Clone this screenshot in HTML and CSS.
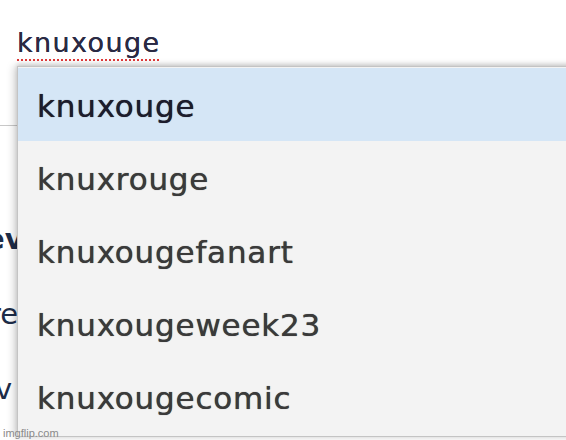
FILE: index.html
```html
<!DOCTYPE html>
<html lang="en">
<head>
    <meta charset="UTF-8">
    <meta name="viewport" content="width=device-width, initial-scale=1.0">
    <title>knuxouge</title>
    <link rel="stylesheet" href="styles.css">
</head>
<body>
    <div class="page">
        <div class="search">
            <span class="query">knuxouge</span>
        </div>
        <div class="content">
            <div class="line bold">ev</div>
            <div class="line shift">re</div>
            <div class="line shift2">v</div>
        </div>

        <ul class="suggest">
            <li class="item active">knuxouge</li>
            <li class="item">knuxrouge</li>
            <li class="item">knuxougefanart</li>
            <li class="item">knuxougeweek23</li>
            <li class="item">knuxougecomic</li>
        </ul>

        <div class="mark">imgflip.com</div>
    </div>
</body>
</html>
```

FILE: styles.css
```css
body {
    margin: 0;
    background-color: #fff;
    font-family: "DejaVu Sans", Verdana, sans-serif;
    overflow: hidden;
}
.page {
    position: relative;
    width: 566px;
    height: 440px;
    overflow: hidden;
}
.search {
    height: 126px;
    border-bottom: 1px solid #c8c8c8;
    box-sizing: border-box;
    padding: 27px 0 0 17px;
}
.query {
    font-size: 27px;
    letter-spacing: 1.4px;
    color: #2a2a44;
    text-shadow: 0 0 0.6px #2a2a44;
    text-decoration: underline dotted #e03a3a;
    text-decoration-thickness: 2px;
    text-underline-offset: 7px;
}
.content {
    padding-top: 76px;
}
.line {
    height: 75px;
    line-height: 75px;
    font-size: 29px;
    color: #1d2c48;
    white-space: nowrap;
}
.bold {
    font-weight: bold;
    margin-left: -15px;
}
.shift {
    margin-left: -11px;
}
.shift2 {
    margin-left: -5px;
}
.suggest {
    position: absolute;
    top: 66px;
    left: 17px;
    right: -20px;
    bottom: 3px;
    margin: 0;
    padding: 1px 0 0;
    list-style: none;
    background-color: #f3f3f3;
    border: 1px solid #c4c4c4;
    box-shadow: -3px 0 8px rgba(0, 0, 0, 0.18), 0 -2px 4px rgba(0, 0, 0, 0.12);
}
.item {
    height: 73px;
    box-sizing: border-box;
    padding: 3px 0 0 19px;
    display: flex;
    align-items: center;
    font-size: 31px;
    letter-spacing: 0.8px;
    color: #3a3a3a;
    text-shadow: 0 0 0.7px #3a3a3a;
}
.item.active {
    background-color: #d5e6f6;
    color: #1c1c2c;
    text-shadow: 0 0 0.7px #1c1c2c;
}
.mark {
    position: absolute;
    left: 3px;
    bottom: 1px;
    font-family: "Liberation Sans", Arial, sans-serif;
    font-size: 11px;
    color: #8a8a8a;
}
```
